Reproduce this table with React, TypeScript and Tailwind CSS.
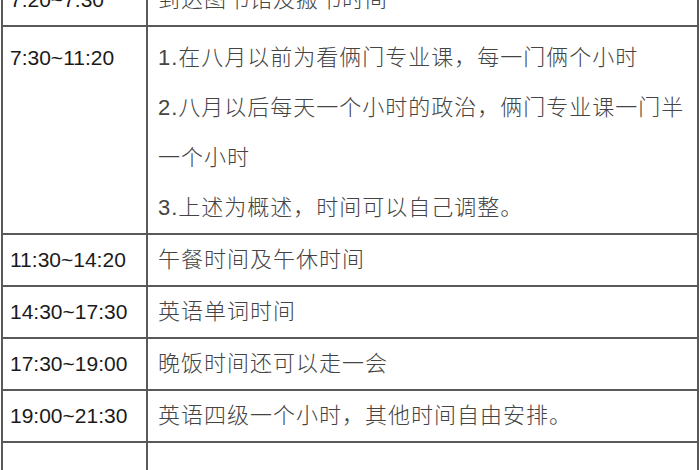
const rows: { time: string; lines: string[] }[] = [
  { time: "7:20~7:30", lines: ["到达图书馆及搬书时间"] },
  {
    time: "7:30~11:20",
    lines: [
      "1.在八月以前为看俩门专业课，每一门俩个小时",
      "2.八月以后每天一个小时的政治，俩门专业课一门半",
      "一个小时",
      "3.上述为概述，时间可以自己调整。",
    ],
  },
  { time: "11:30~14:20", lines: ["午餐时间及午休时间"] },
  { time: "14:30~17:30", lines: ["英语单词时间"] },
  { time: "17:30~19:00", lines: ["晚饭时间还可以走一会"] },
  { time: "19:00~21:30", lines: ["英语四级一个小时，其他时间自由安排。"] },
  { time: "", lines: [""] },
];

const latin = { fontFamily: '"Liberation Sans", Arial, sans-serif' };
const cjk = { fontFamily: '"Liberation Sans", "Noto Sans CJK SC", sans-serif' };

export default function App() {
  return (
    <div className="w-[700px] h-[470px] overflow-hidden bg-white">
      <div className="ml-[1px] w-[698px] -mt-[25px] border-x-2 border-[#595959]">
        {rows.map((row, i) => {
          const multi = row.lines.length > 1;
          return (
            <div key={i} className="flex border-b-2 border-[#595959]">
              <div
                className={`w-[145px] shrink-0 border-r-2 border-[#595959] pl-[7px] text-[21px] leading-[50px] text-[#1a1a1a] ${multi ? "pt-[6px]" : ""}`}
                style={latin}
              >
                {row.time || "\u00a0"}
              </div>
              <div
                className={`flex-1 pl-[10px] text-[22px] leading-[50px] tracking-[1px] text-[#444] font-light ${multi ? "pt-[6px]" : ""}`}
                style={cjk}
              >
                {row.lines.map((l, j) => (
                  <div key={j} className="whitespace-nowrap">
                    {l || "\u00a0"}
                  </div>
                ))}
              </div>
            </div>
          );
        })}
      </div>
    </div>
  );
}
